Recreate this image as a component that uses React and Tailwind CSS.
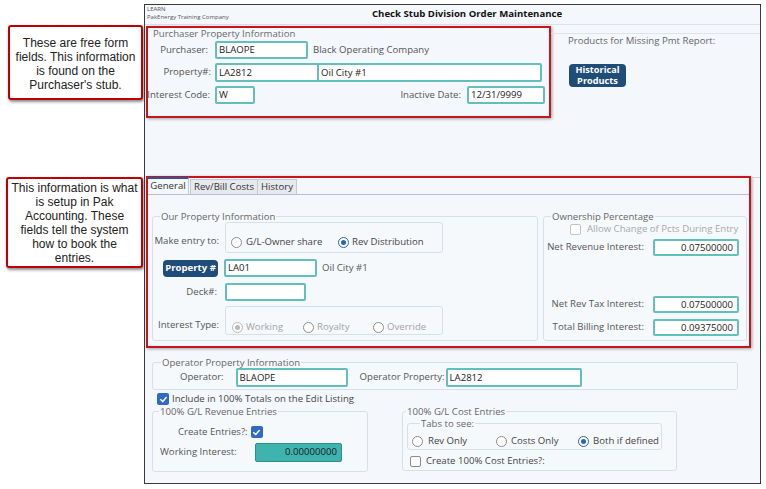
import React from "react";

const ui = "font-['Open_Sans',sans-serif]";

function Inp({ className = "", children, right = false }) {
  return (
    <div
      className={`h-full bg-white border-2 border-[#62bfbb] rounded-[2px] flex items-center text-[9.6px] text-[#222] leading-none whitespace-nowrap ${
        right ? "justify-end pr-[4px]" : "pl-[2px]"
      } ${className}`}
    >
      {children}
    </div>
  );
}

function Radio({ checked, disabled }) {
  return (
    <span
      className={`shrink-0 w-[11px] h-[11px] rounded-full border bg-white flex items-center justify-center ${
        checked ? (disabled ? "border-[#b8b8b8]" : "border-[#2a64b8]") : "border-[#8c8c8c]"
      }`}
    >
      {checked && (
        <span className={`w-[5px] h-[5px] rounded-full ${disabled ? "bg-[#b8b8b8]" : "bg-[#2a64b8]"}`} />
      )}
    </span>
  );
}

function Check({ checked, disabled }) {
  if (checked)
    return (
      <span className="shrink-0 w-[12px] h-[12px] rounded-[2px] bg-[#2f6bc4] flex items-center justify-center">
        <svg width="9" height="9" viewBox="0 0 10 10">
          <path d="M2 5.2 L4.2 7.3 L8 2.8" fill="none" stroke="white" strokeWidth="1.7" strokeLinecap="round" strokeLinejoin="round" />
        </svg>
      </span>
    );
  return (
    <span
      className={`shrink-0 w-[11px] h-[11px] rounded-[2px] border bg-white ${
        disabled ? "border-[#c4c4c4]" : "border-[#8c8c8c]"
      }`}
    />
  );
}

function Legend({ children, className = "" }) {
  return (
    <legend className={`px-[1px] text-[9.6px] leading-[11px] whitespace-nowrap text-[#666] ${className}`}>{children}</legend>
  );
}

function Callout({ className = "", children }) {
  return (
    <div
      className={`bg-white border-[2.5px] border-[#c00000] rounded-[3px] shadow-[1px_2px_3px_rgba(0,0,0,0.45)] font-['Liberation_Sans',Arial,sans-serif] text-[12px] leading-[14px] text-[#222] text-center ${className}`}
    >
      {children}
    </div>
  );
}

export default function App() {
  return (
    <div className="w-[766px] h-[489px] bg-white flex overflow-hidden">
      {/* Left annotation column */}
      <div className="w-[144px] shrink-0 flex flex-col">
        <Callout className="mt-[25px] ml-[8px] w-[135px] h-[75px] pt-[9px]">
          These are free form
          <br />
          fields. This information
          <br />
          is found on the
          <br />
          Purchaser's stub.
        </Callout>
        <Callout className="mt-[77px] ml-[6px] w-[137px] h-[91px] pt-[2px] leading-[13.8px]">
          This information is what
          <br />
          is setup in Pak
          <br />
          Accounting. These
          <br />
          fields tell the system
          <br />
          how to book the
          <br />
          entries.
        </Callout>
      </div>

      {/* Application window */}
      <div className={`mt-[4px] w-[617px] h-[480px] shrink-0 border border-[#3a3a3a] bg-[#f4f8fc] flex flex-col ${ui}`}>
        {/* Header */}
        <div className="h-[20px] shrink-0 border-b border-[#dde2e8] flex">
          <div className="w-[227px] pl-[2px] pt-[1px] text-[6px] leading-[7.5px] text-[#555]">
            <div>LEARN</div>
            <div>PakEnergy Training Company</div>
          </div>
          <div className="pt-[3px] text-[9.6px] leading-[12px] font-bold text-[#111] whitespace-nowrap">
            Check Stub Division Order Maintenance
          </div>
        </div>

        {/* Top section */}
        <div className="h-[151px] shrink-0 flex">
          <div className="mt-[1px] ml-[1px] w-[405px] h-[92px] border-2 border-[#c8141c] shadow-[1px_1px_3px_rgba(0,0,0,0.35)] flex flex-col">
            <div className="pl-[5px] h-[11px] text-[9.6px] leading-[11px] text-[#6a6a6a]">
              Purchaser Property Information
            </div>
            <div className="mt-[2px] h-[18px] flex items-center text-[9.6px] text-[#555] whitespace-nowrap">
              <div className="w-[63px] text-right pr-[3px]">Purchaser:</div>
              <Inp className="ml-[4px] w-[93px]">BLAOPE</Inp>
              <div className="ml-[5px]">Black Operating Company</div>
            </div>
            <div className="mt-[4px] h-[19px] flex items-center text-[9.6px] text-[#555] whitespace-nowrap">
              <div className="w-[63px] text-right">Property#:</div>
              <Inp className="ml-[4px] w-[104px]">LA2812</Inp>
              <Inp className="ml-[-2px] w-[225px]">Oil City #1</Inp>
            </div>
            <div className="mt-[4px] h-[18px] flex items-center text-[9.6px] text-[#555] pr-[4px] whitespace-nowrap">
              <div className="w-[63px] text-right -ml-[1px]">Interest Code:</div>
              <Inp className="ml-[5px] w-[40px]">W</Inp>
              <div className="ml-auto">Inactive Date:</div>
              <Inp className="ml-[6px] w-[78px]">12/31/9999</Inp>
            </div>
          </div>
          <div className="flex-1 mt-[8px] border-t border-[#dfe4ea] pl-[17px] flex flex-col items-start">
            <div className="pt-[1px] text-[9.6px] leading-[12px] text-[#666] whitespace-nowrap">Products for Missing Pmt Report:</div>
            <div className="mt-[17px] ml-[1px] w-[57px] h-[23px] rounded-[4px] bg-[#1f4d7a] text-white font-bold text-[9.2px] leading-[10.5px] flex items-center justify-center text-center">
              <span>
                Historical
                <br />
                Products
              </span>
            </div>
          </div>
        </div>

        {/* Tabs section */}
        <div className="flex shrink-0">
          <div className="ml-[1px] w-[605px] h-[172px] border-2 border-[#c8141c] shadow-[1px_1px_3px_rgba(0,0,0,0.35)] flex flex-col">
            <div className="h-[17px] shrink-0 flex items-end border-b border-[#b9bec6] text-[9.6px] text-[#333] whitespace-nowrap">
              <div className="w-[41px] h-[17px] border-t-2 border-t-[#2458a6] border-r border-[#c5cad1] bg-[#f4f8fc] flex items-center justify-center">
                General
              </div>
              <div className="ml-[1px] w-[68px] h-[15px] border-t border-r border-l border-[#c5cad1] bg-[#e6e9ed] flex items-center justify-center">
                Rev/Bill Costs
              </div>
              <div className="w-[39px] h-[15px] border-t border-r border-[#c5cad1] bg-[#e6e9ed] flex items-center justify-center">
                History
              </div>
            </div>
            <div className="flex">
              {/* Our Property Information */}
              <fieldset className="mt-[16px] ml-[4px] w-[386px] h-[130px] border border-[#d9dfe6] rounded-[3px] bg-[#f6f9fc] text-[9.6px] text-[#555] whitespace-nowrap">
                <Legend className="ml-[7px]">Our Property Information</Legend>
                <div className="flex items-start h-[31px]">
                  <div className="w-[66px] text-right mt-[13px] leading-[12px]">Make entry to:</div>
                  <div className="ml-[6px] w-[218px] h-[31px] border border-[#d9dfe6] rounded-[3px] pt-[13px] pl-[5px] flex items-start">
                    <div className="w-[107px] flex items-center gap-[4px] leading-[12px]">
                      <Radio />
                      <span className="text-[#444]">G/L-Owner share</span>
                    </div>
                    <div className="flex items-center gap-[3px] leading-[12px]">
                      <Radio checked />
                      <span className="text-[#444]">Rev Distribution</span>
                    </div>
                  </div>
                </div>
                <div className="mt-[6px] h-[18px] flex items-center">
                  <div className="w-[66px] flex justify-end pr-[1px]">
                    <div className="w-[55px] h-[17px] rounded-[4px] bg-[#1f4d7a] text-white font-bold flex items-center justify-center">
                      Property #
                    </div>
                  </div>
                  <Inp className="ml-[5px] w-[93px]">LA01</Inp>
                  <div className="ml-[5px]">Oil City #1</div>
                </div>
                <div className="mt-[6px] h-[18px] flex items-center">
                  <div className="w-[66px] text-right pr-[2px]">Deck#:</div>
                  <Inp className="ml-[6px] w-[81px]" />
                </div>
                <div className="mt-[5px] flex items-start h-[29px]">
                  <div className="w-[66px] text-right mt-[13px] leading-[12px]">Interest Type:</div>
                  <div className="ml-[6px] w-[218px] h-[29px] border border-[#d9dfe6] rounded-[3px] pt-[14px] pl-[6px] flex items-start text-[#a3a3a3] leading-[12px]">
                    <div className="w-[71px] flex items-center gap-[3px]">
                      <Radio checked disabled />
                      <span>Working</span>
                    </div>
                    <div className="w-[70px] flex items-center gap-[3px]">
                      <Radio />
                      <span>Royalty</span>
                    </div>
                    <div className="flex items-center gap-[3px]">
                      <Radio />
                      <span>Override</span>
                    </div>
                  </div>
                </div>
              </fieldset>

              {/* Ownership Percentage */}
              <fieldset className="mt-[16px] ml-[5px] w-[204px] h-[130px] border border-[#d9dfe6] rounded-[3px] bg-[#f6f9fc] text-[9.6px] text-[#555] whitespace-nowrap">
                <Legend className="ml-[7px] text-[#444]">Ownership Percentage</Legend>
                <div className="mt-[1px] h-[12px] pl-[26px] flex items-center">
                  <Check disabled />
                  <span className="ml-[6px] text-[#a8a8a8]">Allow Change of Pcts During Entry</span>
                </div>
                <div className="mt-[4px] h-[17px] flex items-center">
                  <div className="w-[100px] text-right">Net Revenue Interest:</div>
                  <Inp right className="ml-[9px] w-[86px]">0.07500000</Inp>
                </div>
                <div className="mt-[40px] h-[17px] flex items-center">
                  <div className="w-[100px] text-right">Net Rev Tax Interest:</div>
                  <Inp right className="ml-[9px] w-[86px]">0.07500000</Inp>
                </div>
                <div className="mt-[6px] h-[17px] flex items-center">
                  <div className="w-[100px] text-right">Total Billing Interest:</div>
                  <Inp right className="ml-[9px] w-[86px]">0.09375000</Inp>
                </div>
              </fieldset>
            </div>
          </div>
          <div className="flex-1 h-[2px] border-b border-[#ccd2d9]" />
        </div>

        {/* Bottom section */}
        <div className="flex flex-col text-[9.6px] text-[#555] whitespace-nowrap">
          <fieldset className="mt-[9px] ml-[7px] w-[586px] h-[33px] border border-[#d9dfe6] rounded-[3px] bg-[#f6f9fc]">
            <Legend className="ml-[8px]">Operator Property Information</Legend>
            <div className="h-[19px] flex items-center">
              <div className="ml-[27px]">Operator:</div>
              <Inp className="ml-[12px] w-[112px]">BLAOPE</Inp>
              <div className="ml-[12px]">Operator Property:</div>
              <Inp className="ml-[1px] w-[136px]">LA2812</Inp>
            </div>
          </fieldset>
          <div className="mt-[3px] h-[12px] ml-[12px] flex items-center">
            <Check checked />
            <span className="ml-[3px] text-[#444]">Include in 100% Totals on the Edit Listing</span>
          </div>
          <div className="mt-[1px] flex items-start">
            <fieldset className="ml-[7px] w-[216px] h-[66px] border border-[#d9dfe6] rounded-[3px] bg-[#f6f9fc]">
              <Legend className="ml-[6px]">100% G/L Revenue Entries</Legend>
              <div className="mt-[9px] h-[12px] pl-[25px] flex items-center">
                <span>Create Entries?:</span>
                <span className="ml-[3px]">
                  <Check checked />
                </span>
              </div>
              <div className="mt-[5px] h-[19px] pl-[7px] flex items-center">
                <span className="w-[76px]">Working Interest:</span>
                <div className="ml-[19px] w-[87px] h-[19px] rounded-[2px] border border-[#2e8f8b] bg-[#3fb3ae] flex items-center justify-end pr-[4px] text-[#1a1a1a]">
                  0.00000000
                </div>
              </div>
            </fieldset>
            <fieldset className="ml-[34px] w-[275px] h-[65px] border border-[#d9dfe6] rounded-[3px] bg-[#f6f9fc]">
              <Legend className="ml-[3px]">100% G/L Cost Entries</Legend>
              <fieldset className="mt-[1px] ml-[4px] w-[255px] h-[32px] border border-[#d9dfe6] rounded-[3px]">
                <Legend className="ml-[12px]">Tabs to see:</Legend>
                <div className="mt-[6px] h-[12px] pl-[4px] flex items-center text-[#444]">
                  <div className="w-[84px] flex items-center gap-[5px]">
                    <Radio />
                    <span>Rev Only</span>
                  </div>
                  <div className="w-[82px] flex items-center gap-[4px]">
                    <Radio />
                    <span>Costs Only</span>
                  </div>
                  <div className="flex items-center gap-[4px]">
                    <Radio checked />
                    <span>Both if defined</span>
                  </div>
                </div>
              </fieldset>
              <div className="mt-[5px] h-[12px] ml-[7px] flex items-center text-[#444]">
                <Check />
                <span className="ml-[5px]">Create 100% Cost Entries?:</span>
              </div>
            </fieldset>
          </div>
        </div>
      </div>
    </div>
  );
}
